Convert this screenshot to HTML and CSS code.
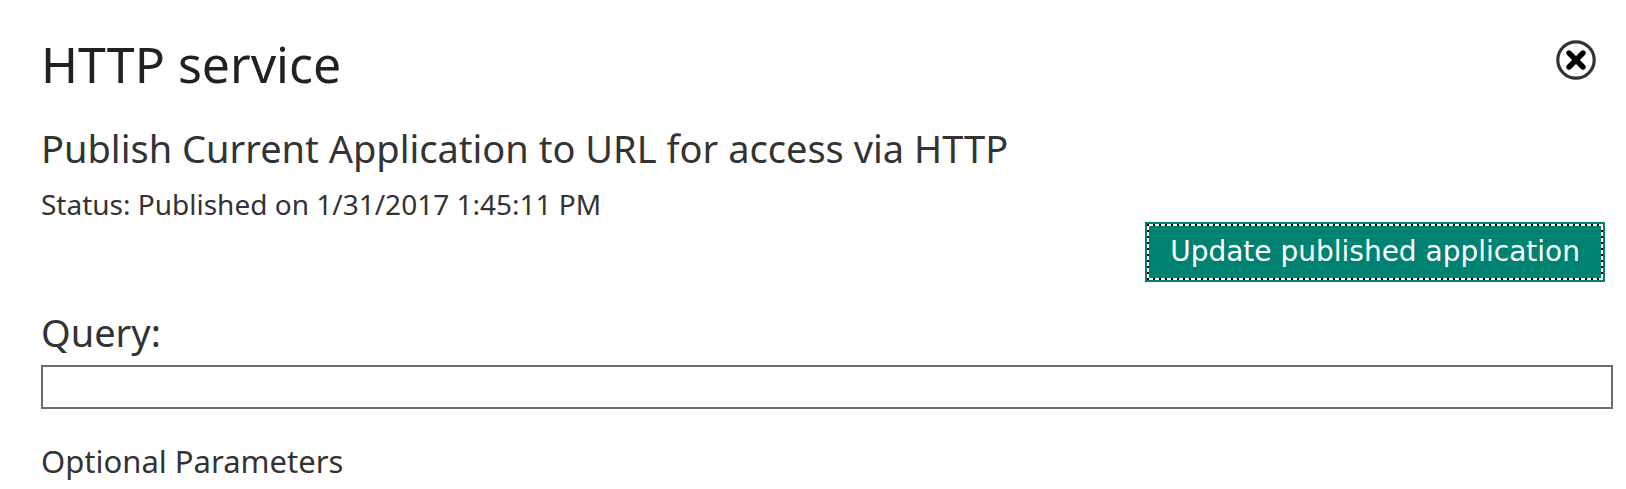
FILE: index.html
```html
<!DOCTYPE html>
<html lang="en">
<head>
<meta charset="utf-8">
<title>HTTP service</title>
<link rel="stylesheet" href="styles.css">
</head>
<body>
<main class="panel">
  <header class="panel-header">
    <h1 class="title">HTTP service</h1>
    <button class="close" type="button" aria-label="Close">
      <svg class="close-icon" viewBox="0 0 40 40" aria-hidden="true">
        <circle cx="20" cy="20" r="18.2" fill="#fff" stroke="#333" stroke-width="3.2"/>
        <path d="M13 13 27 27M27 13 13 27" stroke="#000" stroke-width="5.4" stroke-linecap="round"/>
      </svg>
    </button>
  </header>
  <h2 class="subtitle">Publish Current Application to URL for access via HTTP</h2>
  <p class="status">Status: Published on 1/31/2017 1:45:11 PM</p>
  <div class="actions">
    <button class="update" type="button"><span class="focus-ring">Update published application</span></button>
  </div>
  <label class="query-label" for="query">Query:</label>
  <input class="query" id="query" type="text">
  <h3 class="optional">Optional Parameters</h3>
</main>
</body>
</html>
```

FILE: styles.css
```css
* {
  box-sizing: border-box;
}

body {
  margin: 0;
  background: #fff;
  color: #333;
  font-family: "Segoe UI", "Noto Sans", sans-serif;
}

.panel {
  display: flex;
  flex-direction: column;
  padding: 28px 13px 0 41px;
}

.panel-header {
  display: flex;
  justify-content: space-between;
  align-items: center;
  padding-right: 17px;
}

.title,
.subtitle,
.status,
.optional {
  margin: 0;
  font-weight: 400;
}

.title {
  color: #212121;
  font-size: 50px;
  line-height: 72px;
}

.close {
  width: 40px;
  height: 40px;
  margin-bottom: 8px;
  padding: 0;
  border: 0;
  background: none;
}

.close-icon {
  display: block;
}

.subtitle,
.query-label {
  font-size: 38px;
  line-height: 56px;
}

.subtitle {
  margin-top: 20px;
}

.status {
  font-size: 28px;
  line-height: 40px;
  margin-top: 8px;
}

.actions {
  display: flex;
  justify-content: flex-end;
  margin-top: -2px;
  padding-right: 8px;
}

.update {
  padding: 2px;
  border: 0;
  background: #008272;
  color: #fff;
  font-family: Verdana, "DejaVu Sans", sans-serif;
  font-size: 28px;
  line-height: 36px;
}

.focus-ring {
  display: block;
  padding: 10px 23px;
  background:
    repeating-linear-gradient(90deg, #000 0 2px, #fff 2px 6px) top / 100% 2px no-repeat,
    repeating-linear-gradient(90deg, #000 0 2px, #fff 2px 6px) bottom / 100% 2px no-repeat,
    repeating-linear-gradient(#000 0 2px, #fff 2px 6px) left / 2px 100% no-repeat,
    repeating-linear-gradient(#000 0 2px, #fff 2px 6px) right / 2px 100% no-repeat;
}

.query-label {
  margin-top: 22px;
}

.query {
  width: 100%;
  height: 44px;
  margin: 5px 0 0;
  padding: 0 8px;
  border: 2px solid #6d6d6d;
  border-radius: 0;
  font: inherit;
  font-size: 28px;
}

.optional {
  margin-top: 28px;
  font-size: 31px;
  line-height: 48px;
}
```
